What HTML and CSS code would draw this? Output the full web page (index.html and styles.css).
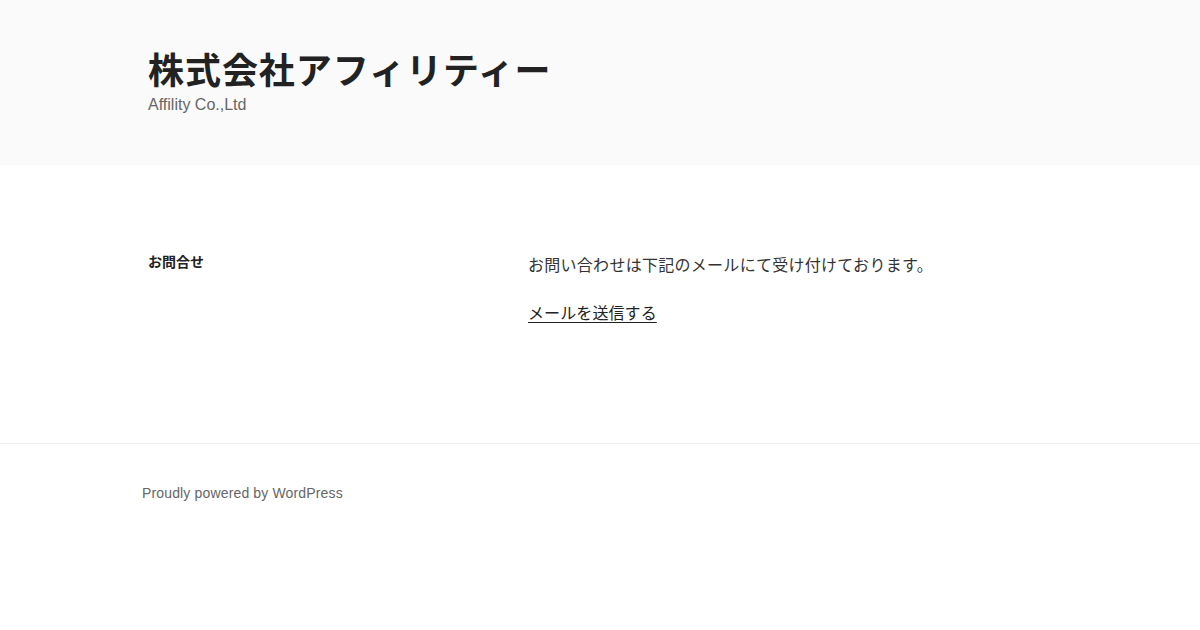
FILE: index.html
```html
<!DOCTYPE html>
<html lang="ja">
<head>
<meta charset="utf-8">
<title>株式会社アフィリティー</title>
<link rel="stylesheet" href="styles.css">
</head>
<body>
<header class="site-header">
  <div class="wrap">
    <h1 class="site-title">株式会社アフィリティー</h1>
    <p class="site-description">Affility Co.,Ltd</p>
  </div>
</header>
<main class="site-content">
  <div class="wrap content-grid">
    <h2 class="page-title">お問合せ</h2>
    <div class="entry">
      <p>お問い合わせは下記のメールにて受け付けております。</p>
      <p><a class="mail-link" href="#">メールを送信する</a></p>
    </div>
  </div>
</main>
<footer class="site-footer">
  <div class="footer-wrap">
    <p class="site-info">Proudly powered by WordPress</p>
  </div>
</footer>
</body>
</html>
```

FILE: styles.css
```css
html, body {
  margin: 0;
  padding: 0;
}
body {
  background: #fff;
  color: #333;
  font-family: "Liberation Sans", "Noto Sans CJK JP", sans-serif;
  font-size: 16px;
  line-height: 1.5;
}
.wrap {
  padding: 0 148px;
}
.site-header {
  background: #fafafa;
  height: 165px;
  box-sizing: border-box;
  padding-top: 44px;
}
.site-title {
  margin: 0;
  font-family: "Noto Sans CJK JP", sans-serif;
  font-size: 36px;
  font-weight: 700;
  line-height: 48px;
  color: #222;
  letter-spacing: 0.95px;
}
.site-description {
  margin: 0;
  font-size: 16px;
  line-height: 24px;
  color: #666;
  margin-top: 1px;
}
.site-content {
  padding-top: 87px;
  height: 279px;
  box-sizing: border-box;
  border-bottom: 1px solid #eee;
}
.content-grid {
  display: grid;
  grid-template-columns: 380px 1fr;
}
.page-title {
  margin: 0;
  font-family: "Noto Sans CJK JP", sans-serif;
  font-size: 14px;
  font-weight: 700;
  line-height: 18px;
  color: #222;
}
.entry p {
  margin: 0 0 24px;
  font-family: "Noto Sans CJK JP", sans-serif;
  font-weight: 400;
  line-height: 24px;
  letter-spacing: 0.28px;
}
.entry .mail-link {
  color: #222;
  letter-spacing: 0.1px;
  text-decoration: underline;
  text-underline-offset: 3px;
}
.footer-wrap {
  padding: 38px 142px 0;
}
.site-info {
  margin: 0;
  font-size: 14px;
  line-height: 22px;
  color: #666;
  letter-spacing: 0.15px;
}
```
